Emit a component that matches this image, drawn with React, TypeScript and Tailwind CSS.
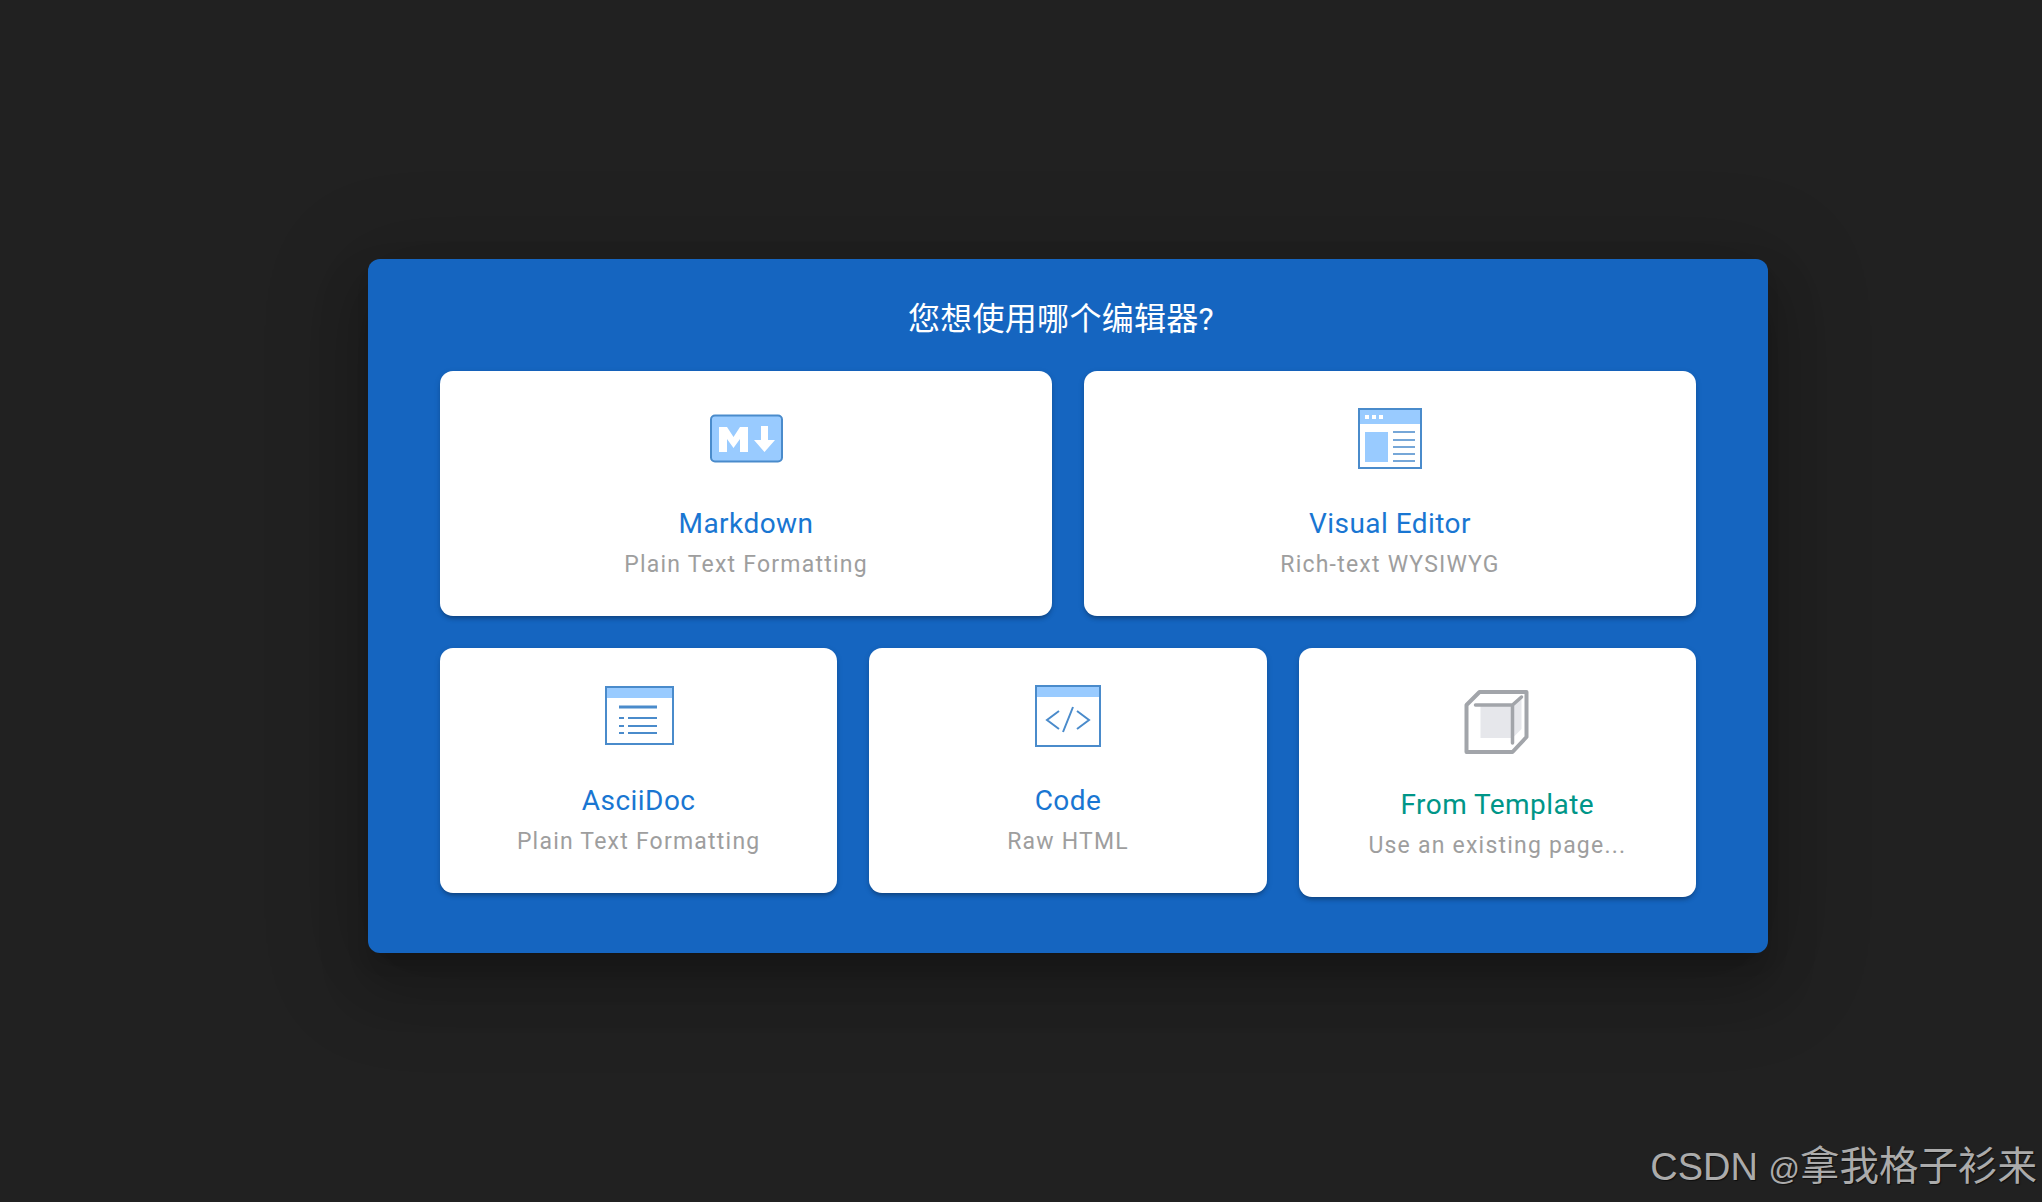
import React from 'react';

const STROKE = '#4A8BCB';
const FILL = '#99CBFF';

function MarkdownIcon() {
  return (
    <svg width="84" height="84" viewBox="0 0 84 84" fill="none">
      <rect x="7" y="19.5" width="71" height="46" rx="4" fill={FILL} stroke={STROKE} strokeWidth="2" />
      <path d="M15 56V31h8l6.500 10L36 31h8v25h-8V43l-6.500 9-6.500-9v13z" fill="#fff" />
      <path d="M57 30h7v14h7L60.500 56 50 44h7z" fill="#fff" />
    </svg>
  );
}

function VisualIcon() {
  return (
    <svg width="84" height="84" viewBox="0 0 84 84" fill="none">
      <rect x="11" y="13" width="62" height="15" fill={FILL} />
      <rect x="11" y="13" width="62" height="59" stroke={STROKE} strokeWidth="2" />
      <rect x="17" y="19" width="4" height="4" fill="#fff" />
      <rect x="24" y="19" width="4" height="4" fill="#fff" />
      <rect x="31" y="19" width="4" height="4" fill="#fff" />
      <rect x="17" y="36" width="23" height="30" fill={FILL} />
      <path d="M45 36h22M45 44h22M45 51h22M45 58h22M45 65h22" stroke={STROKE} strokeWidth="1.6" />
    </svg>
  );
}

function AsciiDocIcon() {
  return (
    <svg width="84" height="84" viewBox="0 0 84 84" fill="none">
      <rect x="9" y="13" width="67" height="11" fill={FILL} />
      <rect x="9" y="13" width="67" height="57" stroke={STROKE} strokeWidth="2" />
      <path d="M22 33h38" stroke={STROKE} strokeWidth="3" />
      <path d="M22 44h5M31 44h29M22 52h5M31 52h29M22 59h5M31 59h29" stroke={STROKE} strokeWidth="1.8" />
    </svg>
  );
}

function CodeIcon() {
  return (
    <svg width="84" height="84" viewBox="0 0 84 84" fill="none">
      <rect x="10" y="12" width="64" height="11" fill={FILL} />
      <rect x="10" y="12" width="64" height="60" stroke={STROKE} strokeWidth="2" />
      <path d="M33 37L21 46l12 9M51 37l12 9-12 9M47 33L37 58" stroke={STROKE} strokeWidth="2" />
    </svg>
  );
}

function TemplateIcon() {
  return (
    <svg width="84" height="88" viewBox="0 0 84 88" fill="none">
      <path d="M25.500 31H57.500L66.500 23V55L57.500 64H25.500z" fill="#E6E7EB" />
      <path d="M24.500 18H71.500V63L57.500 78H11.500V31z" stroke="#A2A5AA" strokeWidth="4" strokeLinejoin="round" />
      <path d="M20.500 31H57.500V69M57.500 31L66.500 23" stroke="#A2A5AA" strokeWidth="3.500" strokeLinecap="round" />
    </svg>
  );
}

function EditorCard({ icon, title, sub, teal, lower }: { icon: React.ReactNode; title: string; sub: string; teal?: boolean; lower?: boolean }) {
  return (
    <div className={`flex flex-col items-center rounded-[13px] bg-white pb-[33px] shadow-[0_4px_4px_-2px_rgba(0,0,0,0.25),0_2px_6px_0_rgba(0,0,0,0.14)] ${lower ? 'pt-[26px]' : 'pt-[25px]'}`}>
      {icon}
      <div className={`text-[28px] leading-[36px] tracking-[0.45px] ${lower ? 'mt-[25px]' : 'mt-[26px]'} ${teal ? 'text-[#009688]' : 'text-[#1976D2]'}`}>{title}</div>
      <div className="mt-[5px] text-[23px] leading-[36px] tracking-[1.22px] text-[#9E9E9E]">{sub}</div>
    </div>
  );
}

export default function App() {
  return (
    <div className="relative flex h-screen items-center justify-center overflow-hidden bg-[#212121] pt-[10px] pl-[94px] font-['Roboto','Noto_Sans_CJK_SC',sans-serif]">
      <div className="w-[1400px] rounded-[12px] bg-[#1565C0] px-[72px] pb-[56px] shadow-[0_14px_20px_-9px_rgba(0,0,0,0.2),0_31px_49px_4px_rgba(0,0,0,0.14),0_16px_90px_20px_rgba(0,0,0,0.16)]">
        <div className="pt-[40px] pr-[14px] pb-[32px] text-center text-[32px] leading-[40px] tracking-[0.3px] text-white">您想使用哪个编辑器?</div>
        <div className="grid grid-cols-2 gap-8">
          <EditorCard icon={<MarkdownIcon />} title="Markdown" sub="Plain Text Formatting" />
          <EditorCard icon={<VisualIcon />} title="Visual Editor" sub="Rich-text WYSIWYG" />
        </div>
        <div className="mt-8 grid grid-cols-3 items-start gap-8">
          <EditorCard lower icon={<AsciiDocIcon />} title="AsciiDoc" sub="Plain Text Formatting" />
          <EditorCard lower icon={<CodeIcon />} title="Code" sub="Raw HTML" />
          <EditorCard lower icon={<TemplateIcon />} title="From Template" sub="Use an existing page..." teal />
        </div>
      </div>
      <div className="absolute right-[5px] bottom-[8px] font-['Liberation_Sans','Noto_Sans_CJK_SC',sans-serif] text-[38px] leading-[48px] text-[#ababab] [text-shadow:1px_1px_1px_rgba(0,0,0,0.6)]">
        CSDN <span className="text-[31px]">@</span><span className="text-[39.5px]">拿我格子衫来</span>
      </div>
    </div>
  );
}
